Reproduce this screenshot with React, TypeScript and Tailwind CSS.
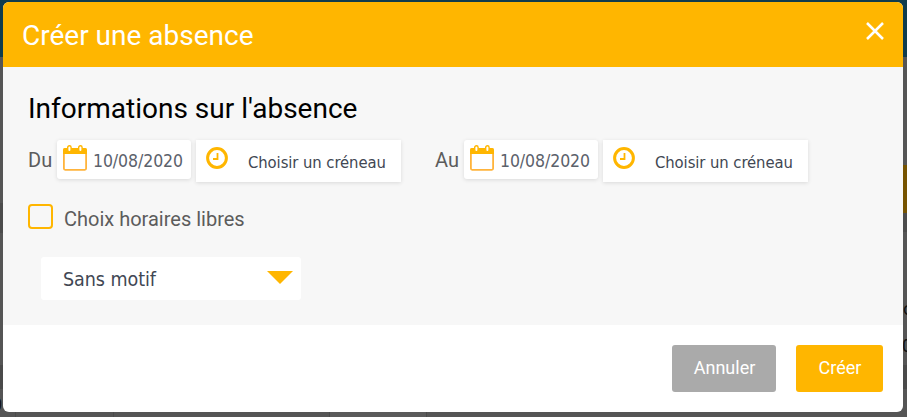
const tahoma = "font-['DejaVu_Sans_Condensed','DejaVu_Sans',sans-serif] [font-stretch:condensed]";

function CalendarIcon() {
  return (
    <svg className="h-[26px] w-6 shrink-0" viewBox="0 0 24 26" fill="none">
      <rect x="0.9" y="4" width="22.2" height="20.8" rx="1.2" fill="#fff" stroke="#ffb43c" strokeWidth="1.8" />
      <path d="M0 5.2Q0 3 2 3H22Q24 3 24 5.2V9H0Z" fill="#ffb600" />
      <rect x="4.7" y="0.7" width="3.4" height="6" rx="1.7" fill="#fff" stroke="#ffb600" strokeWidth="1.4" />
      <rect x="15.7" y="0.7" width="3.4" height="6" rx="1.7" fill="#fff" stroke="#ffb600" strokeWidth="1.4" />
    </svg>
  );
}

function ClockIcon() {
  return (
    <svg className="h-[22px] w-[22px] shrink-0" viewBox="0 0 22 22" fill="none">
      <circle cx="11" cy="11" r="9.4" stroke="#ffb600" strokeWidth="3" />
      <path d="M11.5 6V12H7" stroke="#ffb600" strokeWidth="1.8" />
    </svg>
  );
}

function DateSlot({ label }: { label: string }) {
  return (
    <div className="flex w-[407px] items-start">
      <span className="w-[29px] shrink-0 whitespace-nowrap pt-[6px] font-[Roboto,sans-serif] text-[20px] leading-[28px] text-[#5c5c5c]">
        {label}
      </span>
      <div className="flex h-[39px] w-[134px] items-start rounded-[3px] bg-white pl-[6px] pt-[5px] shadow-[0_1px_4px_rgba(0,0,0,0.12)]">
        <CalendarIcon />
        <span className={`${tahoma} ml-[6px] mt-[3px] whitespace-nowrap text-[17.5px] leading-[26px] tracking-[-0.08px] text-[#5b616b]`}>
          10/08/2020
        </span>
      </div>
      <div className="ml-[5px] flex h-[42px] w-[205px] items-start bg-white pl-[9.5px] pt-[7px] shadow-[0_1px_4px_rgba(0,0,0,0.12)]">
        <ClockIcon />
        <span className={`${tahoma} ml-[20.5px] mt-[3px] whitespace-nowrap text-[16.5px] leading-[26px] tracking-[-0.08px] text-[#414753]`}>
          Choisir un créneau
        </span>
      </div>
    </div>
  );
}

function Backdrop() {
  return (
    <div className="absolute inset-0 bg-[#555]">
      <div className="h-[57px] bg-[#103c4d]" />
      <div className="absolute left-0 top-[203px] h-[30px] w-[3px] bg-[#4c4c4c]" />
      <div className="absolute right-0 top-[165px] h-12 w-1 bg-[#765300]" />
      <div className="absolute right-0 top-[213px] h-[19px] w-1 bg-[#4c4c4c]" />
      <div className="absolute left-0 top-[365px] h-6 w-[3px] bg-[#4a4a4a]" />
      <div className="absolute right-0 top-[365px] h-6 w-1 bg-[#4a4a4a]" />
      <div className="absolute left-[15px] top-[412px] h-[5px] w-px bg-[#4b4b4b]" />
      <div className="absolute left-[113px] top-[412px] h-[5px] w-px bg-[#4b4b4b]" />
      <div className="absolute left-[329px] top-[412px] h-[5px] w-[98px] border-x border-[#4a4a4a] bg-[#5a5a5a]" />
      <span className="absolute left-[903px] top-[297px] font-[Roboto,sans-serif] text-[18px] leading-6 text-[#111]">o</span>
      <span className="absolute left-[902px] top-[334px] font-[Roboto,sans-serif] text-[18px] leading-6 text-[#111]">0</span>
      <span className="absolute left-[-7px] top-[393px] font-[Roboto,sans-serif] text-[16px] leading-6 text-[#111]">0</span>
    </div>
  );
}

export default function App() {
  return (
    <main className="relative h-[417px] w-[907px] overflow-hidden">
      <Backdrop />
      <section className="relative ml-[3px] mt-[2px] flex h-[410px] w-[900px] flex-col overflow-hidden rounded-[6px] bg-white font-[Roboto,sans-serif]">
        <header className="flex h-[65px] shrink-0 items-start justify-between bg-[#ffb600] pl-[19px] pr-[19px] text-white">
          <h1 className="mt-[17px] whitespace-nowrap text-[28px] leading-[34px]">Créer une absence</h1>
          <svg className="mt-5 h-[18px] w-[18px]" viewBox="0 0 18 18" fill="none">
            <path d="M1 1L17 17M17 1L1 17" stroke="#fff" strokeWidth="2.5" />
          </svg>
        </header>
        <div className="h-[258px] shrink-0 bg-[#f7f7f7] pl-[25px] pt-[25px]">
          <h2 className="h-[48px] whitespace-nowrap text-[28px] leading-[34px] text-black">Informations sur l'absence</h2>
          <div className="flex h-[64px]">
            <DateSlot label="Du" />
            <DateSlot label="Au" />
          </div>
          <label className="flex h-[53px] items-start">
            <span className="h-[25px] w-[25px] shrink-0 rounded-[4px] border-2 border-[#ffb600]" />
            <span className="ml-[11px] mt-[1px] whitespace-nowrap text-[20px] leading-[28px] text-[#5c5c5c]">Choix horaires libres</span>
          </label>
          <div className="ml-[13px] flex h-[43px] w-[260px] items-start justify-between rounded-[3px] bg-white pl-[22px] pr-2">
            <span className={`${tahoma} mt-[9px] whitespace-nowrap text-[19.5px] leading-[28px] tracking-[-0.05px] text-[#414753]`}>Sans motif</span>
            <svg className="mt-[14px] h-[13px] w-[26px]" viewBox="0 0 26 13">
              <path d="M0 0H26L13 13Z" fill="#ffb600" />
            </svg>
          </div>
        </div>
        <footer className="flex items-start justify-end gap-5 pr-5 pt-5 text-[18px] text-white">
          <button className="h-[47px] w-[104px] rounded-[3px] bg-[#aaa] pb-[2px] pl-px">Annuler</button>
          <button className="h-[47px] w-[87px] rounded-[3px] bg-[#ffb600] pb-[2px] pl-px">Créer</button>
        </footer>
      </section>
    </main>
  );
}
